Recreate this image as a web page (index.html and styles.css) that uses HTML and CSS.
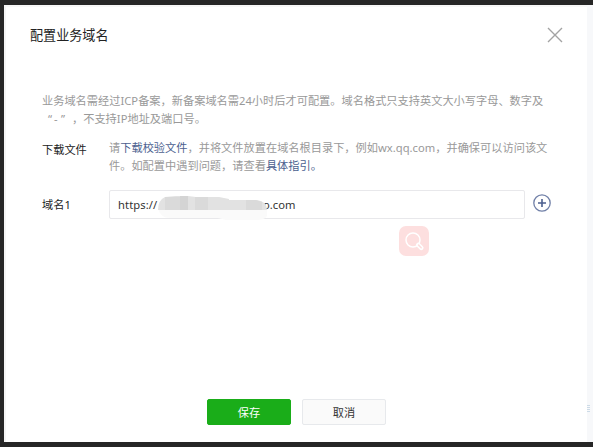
FILE: index.html
```
<!DOCTYPE html>
<html lang="zh-CN">
<head>
<meta charset="utf-8">
<title>配置业务域名</title>
<link rel="stylesheet" href="styles.css">
</head>
<body>
<div class="backdrop">
  <main class="dialog">
    <header class="head">
      <h1 class="title">配置业务域名</h1>
      <svg class="close" viewBox="0 0 16 16"><path d="M1 1L15 15M15 1L1 15"/></svg>
    </header>
    <p class="intro">业务域名需经过ICP备案，新备案域名需24小时后才可配置。域名格式只支持英文大小写字母、数字及<br><span class="quote open">“</span><span class="dash">-</span><span class="quote">”</span>，不支持IP地址及端口号。</p>
    <div class="row">
      <span class="label">下载文件</span>
      <p class="desc">请<a>下载校验文件</a>，并将文件放置在域名根目录下，例如<span class="host">wx.qq.com</span>，并确保可以访问该文<br>件。如配置中遇到问题，请查看<a>具体指引。</a></p>
    </div>
    <div class="row domain">
      <span class="label">域名1</span>
      <div class="field"><span class="scheme">https://</span><span class="tail">o.com</span>
        <svg class="smudge" viewBox="0 0 112 26">
          <path fill="#fafafa" d="M0 13H109V20Q107 24 98 24H68L60 22H12Q3 22 0 13Z"/>
          <path fill="#e2e2e2" d="M0 14Q0 4 7 1L18 0H30L38 1H61L71 3V4H98Q109 5 109 14Z"/>
          <path fill="#dadada" d="M7 1H22V14H7ZM37 1H50V14H37ZM88 4H98L104 6V14H88Z"/>
          <path fill="#d4d4d4" d="M22 0H30V14H22Z"/>
        </svg>
      </div>
      <svg class="add" viewBox="0 0 18 18"><circle cx="9" cy="9" r="8.2"/><path d="M5 9H13M9 5V13"/></svg>
    </div>
    <footer class="actions">
      <button class="btn primary">保存</button>
      <button class="btn">取消</button>
    </footer>
    <svg class="search" viewBox="0 0 30 30"><rect width="30" height="30" rx="7"/><circle cx="14" cy="14" r="7"/><path class="outer" d="M19.3 18.8L22.3 21.8"/><path class="inner" d="M19.6 19.1L22.2 21.7"/></svg>
  </main>
  <div class="marks"><i></i><i></i><i></i><i></i></div>
</div>
</body>
</html>
```
FILE: styles.css
```
* { box-sizing: border-box; }
body {
  margin: 0;
  font: 11.2px/19px "Noto Sans", "Noto Sans CJK SC", sans-serif;
  color: #333;
}
.backdrop {
  position: relative;
  height: 447px;
  padding: 5px 0 5px 4px;
  background: linear-gradient(#f7f8fa, #f7f8fa) right 0 top 5px / 6px 437px no-repeat, #262626;
  overflow: hidden;
}
.dialog {
  position: relative;
  display: flex;
  flex-direction: column;
  width: 583px;
  height: 437px;
  border-top: 2px solid #f7f7f7;
  border-left: 2px solid #f5f5f5;
  background: #fff;
  padding: 17px 24px 17px 36px;
}
.head {
  display: flex;
  justify-content: space-between;
  align-items: center;
  margin-left: -12px;
  height: 22px;
}
.title {
  margin: 0;
  font-size: 13.1px;
  font-weight: 400;
  color: #222;
}
.close { width: 16px; height: 16px; fill: none; stroke: #a3a3a3; stroke-width: 1.4; }
.intro {
  margin: 46px 0 0;
  line-height: 18px;
  letter-spacing: .02px;
  color: #999;
  white-space: nowrap;
}
.quote { display: inline-block; width: 11px; }
.quote.open { width: 6px; margin-left: 6px; }
.dash { display: inline-block; width: 7px; }
.row { display: flex; margin-top: 11px; white-space: nowrap; }
.label { width: 67px; flex: none; padding-top: 1px; color: #222; }
.desc { margin: 0; line-height: 18px; letter-spacing: .02px; color: #999; }
.desc a { color: #4c5f8f; }
.domain { margin-top: 15px; }
.domain .label { padding-top: 5px; }
.field {
  position: relative;
  width: 416px;
  height: 29px;
  padding: 0 8px;
  border: 1px solid #e8e8eb;
  border-radius: 2px;
  line-height: 28px;
}
.scheme { display: inline-block; width: 145px; letter-spacing: .1px; }
.smudge { position: absolute; left: 48px; top: 5px; width: 112px; height: 26px; }
.add { width: 18px; height: 18px; margin: 4px 0 0 8px; fill: none; stroke: #7180a8; stroke-width: 1.3; }
.add path { stroke: #4c5f8f; stroke-width: 1.6; }
.actions { display: flex; gap: 11px; margin: auto 0 0 165px; }
.btn {
  width: 84px;
  height: 26px;
  padding: 0;
  border: 1px solid #e7e9ec;
  border-radius: 2px;
  background: #fafafa;
  color: #333;
  font: inherit;
}
.btn.primary { border-color: #1aad19; background: #1aad19; color: #fff; }
.search { position: absolute; left: 393px; top: 219px; width: 30px; height: 30px; fill: none; stroke: #fff; stroke-width: 1.5; stroke-linecap: round; }
.search rect { fill: #fddfdf; stroke: none; }
.search .outer { stroke-width: 4.5; }
.search .inner { stroke: #fddfdf; stroke-width: 1.5; }
.marks { position: absolute; left: 587px; top: 405px; display: grid; gap: 1px; }
.marks i { width: 3px; height: 1px; background: #cddbe7; }
```
